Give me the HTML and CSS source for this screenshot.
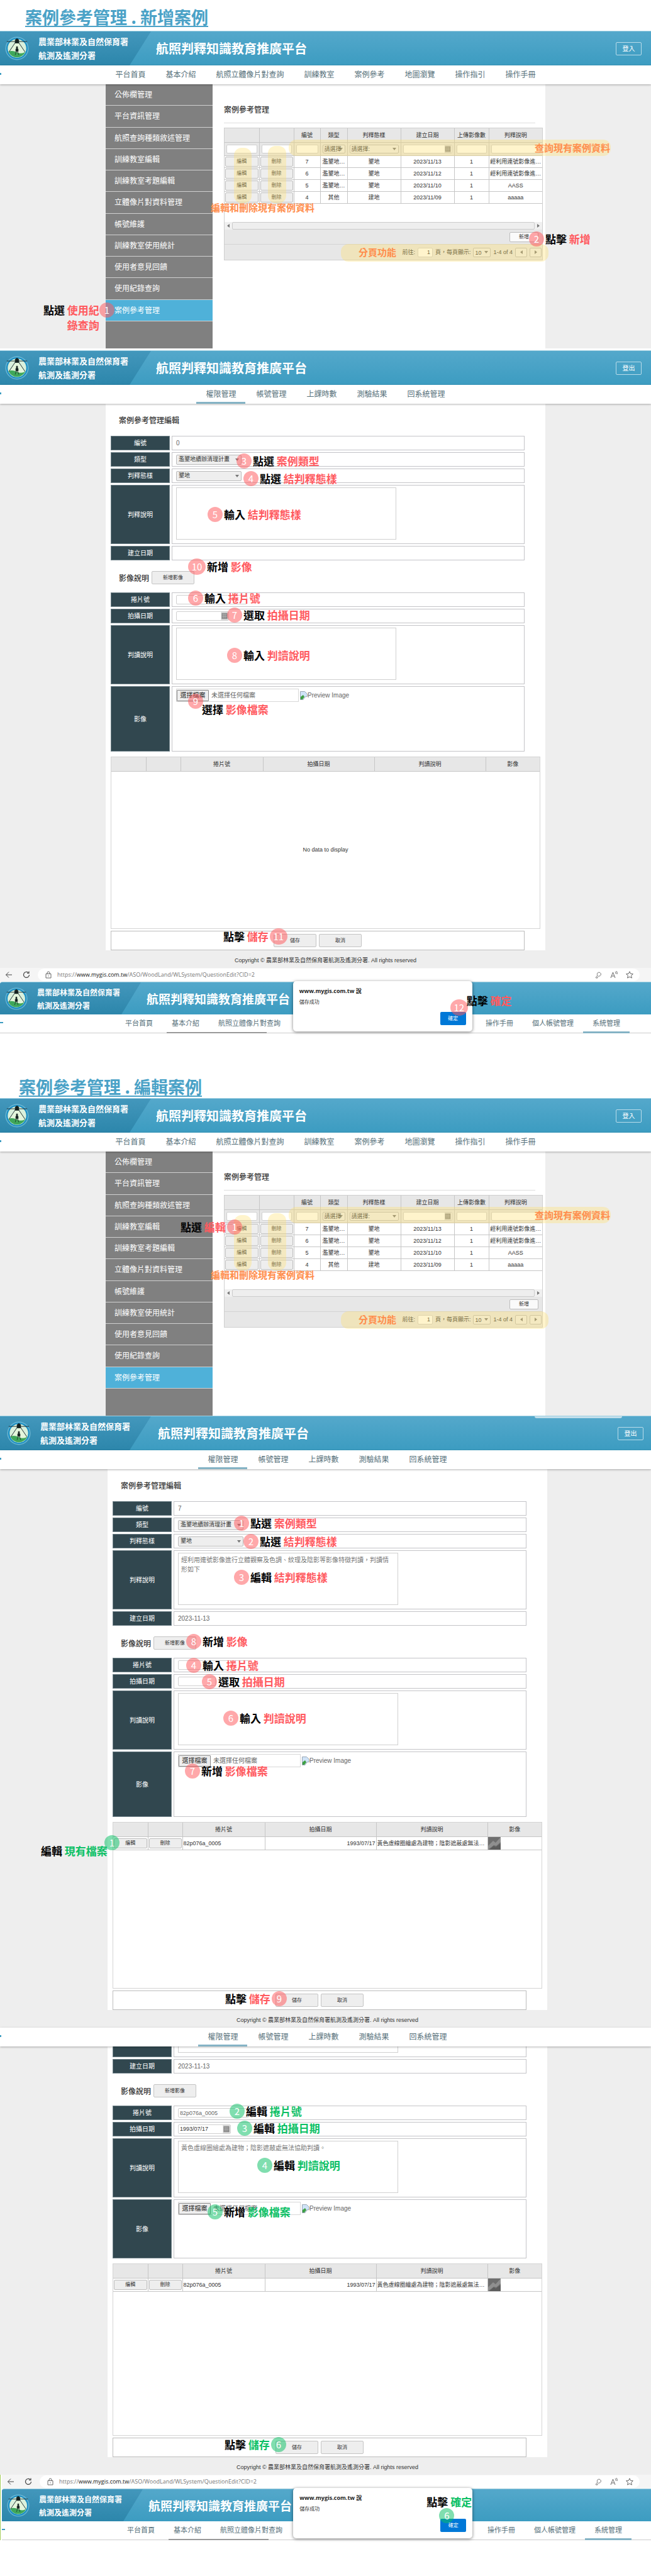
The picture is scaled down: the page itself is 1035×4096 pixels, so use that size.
FILE: index.html
```html
<!DOCTYPE html>
<html lang="zh-Hant">
<head>
<meta charset="utf-8">
<meta name="viewport" content="width=device-width, initial-scale=1">
<title>案例參考管理</title>
<link rel="stylesheet" href="styles.css">
</head>
<body>
<svg class="defs" aria-hidden="true">
  <symbol id="logo" viewBox="0 0 40 40">
    <circle cx="20" cy="20" r="19.5" fill="#8fd0e8" opacity=".6"/>
    <circle cx="20" cy="20" r="18" fill="#1c8fc4"/>
    <circle cx="20" cy="20" r="15.5" fill="#d9f0dc"/>
    <path d="M20 6 7 27a15 15 0 0 0 26 0z" fill="#e4f5dc"/>
    <path d="M6 25.500q6-3 14 1t14-1a15 15 0 0 1-28 0z" fill="#3fa75a"/>
    <path d="M20 6 6.500 26M20 6l13.500 20M3 8.500h34" fill="none" stroke="#1c2a2c" stroke-width="1"/>
    <path d="M17 5.500 20 3.500l3 2V11h-6zM19 17h2v4h1v4h-4v-4h1zM19 25l-2 6M21 25l2 6" fill="#14201f" stroke="#14201f" stroke-width=".8"/>
  </symbol>
  <symbol id="cal" viewBox="0 0 12 14">
    <rect width="12" height="14" fill="#d8d8d8"/>
    <rect x="1" y="2" width="10" height="10" fill="#8a8a8a"/>
    <path d="M2 5h8M2 8h8M4 3v8M7 3v8" stroke="#bdbdbd" stroke-width=".7"/>
  </symbol>
  <symbol id="broken" viewBox="0 0 12 14">
    <path d="M.5.500h7l4 4v4L8 9l-3 4.500H.500z" fill="#cfe3f7" stroke="#9aa7b5"/>
    <path d="M1 13V9l4-3 2 3-3 4z" fill="#3ea043"/>
  </symbol>
  <symbol id="photo" viewBox="0 0 20 20">
    <rect width="20" height="20" fill="#6e6e6e"/>
    <path d="M0 14 8 6l4 3 8-9v8l-7 6-4-1-9 7z" fill="#8f8f8f"/>
    <path d="m2 20 7-6 3 2 8-6v10z" fill="#5c5c5c"/>
  </symbol>
  <symbol id="back" viewBox="0 0 12 12"><path d="M11 6H1.500M6 1.500 1.500 6 6 10.500" fill="none" stroke="#444" stroke-width="1"/></symbol>
  <symbol id="reload" viewBox="0 0 12 12"><path d="M10.500 6A4.500 4.500 0 1 1 9 2.600M10 .5V3.500H7" fill="none" stroke="#444" stroke-width="1.200"/></symbol>
  <symbol id="lock" viewBox="0 0 12 12"><path d="M2 4.500h8v6.500H2zM4 4.500V3a2 2 0 0 1 4 0v1.500M6 7v1.500" fill="none" stroke="#666" stroke-width="1"/></symbol>
  <symbol id="key" viewBox="0 0 12 12"><path d="M5 7a3 3 0 1 1 1.500 1L5 9.500V11H2.500V9.500z" fill="none" stroke="#777" stroke-width="1"/></symbol>
  <symbol id="read" viewBox="0 0 12 12"><path d="m1 11 3.500-9L8 11M2.300 8h4.400M8 1q1.500 1.500 1 3.500M10 0q2 2.500 1 5" fill="none" stroke="#666" stroke-width="1"/></symbol>
  <symbol id="star" viewBox="0 0 12 12"><path d="m6 .8 1.600 3.500 3.800.4-2.800 2.600.8 3.800L6 9.200l-3.400 1.900.8-3.800L.6 4.700l3.800-.4z" fill="none" stroke="#666"/></symbol>
</svg>

<div class="caption"><h1><a href="#create">案例參考管理 . 新增案例</a></h1></div>

<section class="screen" id="create">
  <header class="bar">
    <svg class="logo"><use href="#logo"/></svg>
    <p class="org">農業部林業及自然保育署<br>航測及遙測分署</p>
    <p class="site">航照判釋知識教育推廣平台</p>
    <button class="login" type="button">登入</button>
  </header>
  <nav class="nav">
    <a href="#">平台首頁</a><a href="#">基本介紹</a><a href="#">航照立體像片對查詢</a><a href="#">訓練教室</a><a href="#">案例參考</a><a href="#">地圖瀏覽</a><a href="#">操作指引</a><a href="#">操作手冊</a>
  </nav>
  <div class="stage">
    <div class="sheet split">
      <aside class="side">
        <ul>
          <li><a href="#">公佈欄管理</a></li>
          <li><a href="#">平台資訊管理</a></li>
          <li><a href="#">航照查詢種類敘述管理</a></li>
          <li><a href="#">訓練教室編輯</a></li>
          <li><a href="#">訓練教室考題編輯</a></li>
          <li><a href="#">立體像片對資料管理</a></li>
          <li><a href="#">帳號維護</a></li>
          <li><a href="#">訓練教室使用統計</a></li>
          <li><a href="#">使用者意見回饋</a></li>
          <li><a href="#">使用紀錄查詢</a></li>
          <li class="on"><a href="#">案例參考管理</a></li>
        </ul>
      </aside>
      <main class="list">
        <h2>案例參考管理</h2>
        <div class="panel">
          <div class="rows">
            <table class="grid cases">
              <colgroup><col class="w-btn"><col class="w-btn"><col class="w-no"><col class="w-type"><col class="w-form"><col class="w-date"><col class="w-count"><col></colgroup>
              <thead>
                <tr><th></th><th></th><th>編號</th><th>類型</th><th>判釋態樣</th><th>建立日期</th><th>上傳影像數</th><th>判釋說明</th></tr>
                <tr class="filter">
                  <td><input type="text" aria-label="編輯"></td><td><input type="text" aria-label="刪除"></td><td><input type="text" aria-label="編號"></td>
                  <td><select aria-label="類型"><option>請選擇</option></select></td>
                  <td><select aria-label="判釋態樣"><option>請選擇:</option></select></td>
                  <td><span class="date"><input type="text" aria-label="建立日期"><svg><use href="#cal"/></svg></span></td>
                  <td><input type="text" aria-label="上傳影像數"></td><td><input type="text" aria-label="判釋說明"></td>
                </tr>
              </thead>
              <tbody>
                <tr><td><button type="button">編輯</button></td><td><button type="button">刪除</button></td><td>7</td><td>濫墾地…</td><td>墾地</td><td>2023/11/13</td><td>1</td><td>經利用連號影像進…</td></tr>
                <tr><td><button type="button">編輯</button></td><td><button type="button">刪除</button></td><td>6</td><td>濫墾地…</td><td>墾地</td><td>2023/11/12</td><td>1</td><td>經利用連號影像進…</td></tr>
                <tr><td><button type="button">編輯</button></td><td><button type="button">刪除</button></td><td>5</td><td>濫墾地…</td><td>墾地</td><td>2023/11/10</td><td>1</td><td>AASS</td></tr>
                <tr><td><button type="button">編輯</button></td><td><button type="button">刪除</button></td><td>4</td><td>其他</td><td>建地</td><td>2023/11/09</td><td>1</td><td>aaaaa</td></tr>
              </tbody>
            </table>
          </div>
          <div class="scroll"><i class="tri left"></i><span></span><i class="tri right"></i></div>
          <div class="tools"><button type="button">新增</button></div>
          <div class="pager">
            <label for="page1">前往:</label><input id="page1" type="text" value="1"><label for="size1">頁，每頁顯示:</label>
            <select id="size1"><option>10</option></select><span>1-4 of 4</span>
            <button type="button" aria-label="上一頁"><i class="tri left"></i></button><button type="button" aria-label="下一頁"><i class="tri right"></i></button>
          </div>
        </div>
      </main>
      <div class="mark mark-filter">查詢現有案例資料</div>
      <div class="mark mark-edit"></div>
      <div class="mark mark-delete"></div>
      <div class="mark mark-pager">分頁功能</div>
      <p class="hint">編輯和刪除現有案例資料</p>
      <div class="note s1-n1"><b>1</b></div>
      <p class="note s1-t1"><span>點選 <em>使用紀</em><br><em>錄查詢</em></span></p>
      <p class="note s1-n2"><b>2</b><span>點擊 <em>新增</em></span></p>
    </div>
  </div>
</section>

<section class="screen follow">
  <header class="bar">
    <svg class="logo"><use href="#logo"/></svg>
    <p class="org">農業部林業及自然保育署<br>航測及遙測分署</p>
    <p class="site">航照判釋知識教育推廣平台</p>
    <button class="login" type="button">登出</button>
  </header>
  <nav class="nav">
    <a class="on" href="#">權限管理</a><a href="#">帳號管理</a><a href="#">上課時數</a><a href="#">測驗結果</a><a href="#">回系統管理</a>
  </nav>
  <div class="stage">
    <div class="sheet">
      <h2 class="form-title">案例參考管理編輯</h2>
      <table class="form">
        <tr><th>編號</th><td>0</td></tr>
        <tr><th><label for="type2">類型</label></th><td><select id="type2"><option>濫墾地續辦清理計畫</option></select></td></tr>
        <tr><th><label for="kind2">判釋態樣</label></th><td><select id="kind2"><option>墾地</option></select></td></tr>
        <tr class="tall"><th><label for="desc2">判釋說明</label></th><td><textarea id="desc2"></textarea></td></tr>
        <tr><th>建立日期</th><td></td></tr>
      </table>
      <div class="sub"><h3>影像說明</h3><button class="push" type="button">新增影像</button></div>
      <table class="form">
        <tr><th><label for="roll2">捲片號</label></th><td><input id="roll2" class="roll" type="text"></td></tr>
        <tr><th><label for="shot2">拍攝日期</label></th><td><span class="date"><input id="shot2" type="text"><svg><use href="#cal"/></svg></span></td></tr>
        <tr class="tall"><th><label for="read2">判讀說明</label></th><td><textarea id="read2"></textarea></td></tr>
        <tr class="taller"><th>影像</th><td><div class="files"><label class="file"><input type="file"><span>選擇檔案</span>未選擇任何檔案</label><span class="alt"><svg><use href="#broken"/></svg>Preview Image</span></div></td></tr>
      </table>
      <div class="images">
        <table class="grid">
          <colgroup><col class="w-btn"><col class="w-btn"><col class="w-roll"><col class="w-shot"><col class="w-shot"><col></colgroup>
          <thead><tr><th></th><th></th><th>捲片號</th><th>拍攝日期</th><th>判讀說明</th><th>影像</th></tr></thead>
        </table>
        <p class="empty">No data to display</p>
      </div>
      <div class="actions"><button class="push" type="button">儲存</button><button class="push" type="button">取消</button></div>
      <p class="note s2-n3"><b>3</b><span>點選 <em>案例類型</em></span></p>
      <p class="note s2-n4"><b>4</b><span>點選 <em>結判釋態樣</em></span></p>
      <p class="note s2-n5"><b>5</b><span>輸入 <em>結判釋態樣</em></span></p>
      <p class="note s2-n10"><b class="wide">10</b><span>新增 <em>影像</em></span></p>
      <p class="note s2-n6"><b>6</b><span>輸入 <em>捲片號</em></span></p>
      <p class="note s2-n7"><b>7</b><span>選取 <em>拍攝日期</em></span></p>
      <p class="note s2-n8"><b>8</b><span>輸入 <em>判讀說明</em></span></p>
      <div class="note s2-n9"><b>9</b></div>
      <p class="note s2-t9"><span>選擇 <em>影像檔案</em></span></p>
      <p class="note s2-n11"><span>點擊 <em>儲存</em></span><b class="wide">11</b></p>
    </div>
  </div>
  <footer class="foot">Copyright © 農業部林業及自然保育署航測及遙測分署. All rights reserved</footer>
</section>

<section class="screen browser">
  <div class="address">
    <svg><use href="#back"/></svg><svg><use href="#reload"/></svg>
    <div class="url"><svg><use href="#lock"/></svg><span>https://<strong>www.mygis.com.tw</strong>/ASO/WoodLand/WLSystem/QuestionEdit?CID=2</span><svg><use href="#key"/></svg><svg><use href="#read"/></svg><svg><use href="#star"/></svg></div>
  </div>
  <header class="bar">
    <svg class="logo"><use href="#logo"/></svg>
    <p class="org">農業部林業及自然保育署<br>航測及遙測分署</p>
    <p class="site">航照判釋知識教育推廣平台</p>
  </header>
  <nav class="nav">
    <a href="#">平台首頁</a><a href="#">基本介紹</a><a href="#">航照立體像片對查詢</a><a href="#">訓練教室</a><a href="#">案例參考</a><a href="#">地圖瀏覽</a><a href="#">操作指引</a><a href="#">操作手冊</a><a href="#">個人帳號管理</a><a class="on" href="#">系統管理</a>
  </nav>
  <div class="dialog" role="dialog" aria-label="www.mygis.com.tw 說">
    <h4>www.mygis.com.tw 說</h4>
    <p>儲存成功</p>
    <button type="button">確定</button>
    <div class="note s3-n12"><b class="wide">12</b></div>
    <div class="note s3-t12"><span>點擊 <em>確定</em></span></div>
  </div>
</section>

<div class="caption second"><h1><a href="#edit">案例參考管理 . 編輯案例</a></h1></div>

<section class="screen" id="edit">
  <header class="bar">
    <svg class="logo"><use href="#logo"/></svg>
    <p class="org">農業部林業及自然保育署<br>航測及遙測分署</p>
    <p class="site">航照判釋知識教育推廣平台</p>
    <button class="login" type="button">登入</button>
  </header>
  <nav class="nav">
    <a href="#">平台首頁</a><a href="#">基本介紹</a><a href="#">航照立體像片對查詢</a><a href="#">訓練教室</a><a href="#">案例參考</a><a href="#">地圖瀏覽</a><a href="#">操作指引</a><a href="#">操作手冊</a>
  </nav>
  <div class="stage">
    <div class="sheet split">
      <aside class="side">
        <ul>
          <li><a href="#">公佈欄管理</a></li>
          <li><a href="#">平台資訊管理</a></li>
          <li><a href="#">航照查詢種類敘述管理</a></li>
          <li><a href="#">訓練教室編輯</a></li>
          <li><a href="#">訓練教室考題編輯</a></li>
          <li><a href="#">立體像片對資料管理</a></li>
          <li><a href="#">帳號維護</a></li>
          <li><a href="#">訓練教室使用統計</a></li>
          <li><a href="#">使用者意見回饋</a></li>
          <li><a href="#">使用紀錄查詢</a></li>
          <li class="on"><a href="#">案例參考管理</a></li>
        </ul>
      </aside>
      <main class="list">
        <h2>案例參考管理</h2>
        <div class="panel">
          <div class="rows">
            <table class="grid cases">
              <colgroup><col class="w-btn"><col class="w-btn"><col class="w-no"><col class="w-type"><col class="w-form"><col class="w-date"><col class="w-count"><col></colgroup>
              <thead>
                <tr><th></th><th></th><th>編號</th><th>類型</th><th>判釋態樣</th><th>建立日期</th><th>上傳影像數</th><th>判釋說明</th></tr>
                <tr class="filter">
                  <td><input type="text" aria-label="編輯"></td><td><input type="text" aria-label="刪除"></td><td><input type="text" aria-label="編號"></td>
                  <td><select aria-label="類型"><option>請選擇</option></select></td>
                  <td><select aria-label="判釋態樣"><option>請選擇:</option></select></td>
                  <td><span class="date"><input type="text" aria-label="建立日期"><svg><use href="#cal"/></svg></span></td>
                  <td><input type="text" aria-label="上傳影像數"></td><td><input type="text" aria-label="判釋說明"></td>
                </tr>
              </thead>
              <tbody>
                <tr><td><button type="button">編輯</button></td><td><button type="button">刪除</button></td><td>7</td><td>濫墾地…</td><td>墾地</td><td>2023/11/13</td><td>1</td><td>經利用連號影像進…</td></tr>
                <tr><td><button type="button">編輯</button></td><td><button type="button">刪除</button></td><td>6</td><td>濫墾地…</td><td>墾地</td><td>2023/11/12</td><td>1</td><td>經利用連號影像進…</td></tr>
                <tr><td><button type="button">編輯</button></td><td><button type="button">刪除</button></td><td>5</td><td>濫墾地…</td><td>墾地</td><td>2023/11/10</td><td>1</td><td>AASS</td></tr>
                <tr><td><button type="button">編輯</button></td><td><button type="button">刪除</button></td><td>4</td><td>其他</td><td>建地</td><td>2023/11/09</td><td>1</td><td>aaaaa</td></tr>
              </tbody>
            </table>
          </div>
          <div class="scroll"><i class="tri left"></i><span></span><i class="tri right"></i></div>
          <div class="tools"><button type="button">新增</button></div>
          <div class="pager">
            <label for="page2">前往:</label><input id="page2" type="text" value="1"><label for="size2">頁，每頁顯示:</label>
            <select id="size2"><option>10</option></select><span>1-4 of 4</span>
            <button type="button" aria-label="上一頁"><i class="tri left"></i></button><button type="button" aria-label="下一頁"><i class="tri right"></i></button>
          </div>
        </div>
      </main>
      <div class="mark mark-filter">查詢現有案例資料</div>
      <div class="mark mark-edit"></div>
      <div class="mark mark-delete"></div>
      <div class="mark mark-pager">分頁功能</div>
      <p class="hint">編輯和刪除現有案例資料</p>
      <p class="note s4-n1"><span>點選 <em>編輯</em></span><b>1</b></p>
    </div>
  </div>
</section>

<section class="screen shift">
  <header class="bar tabbed">
    <svg class="logo"><use href="#logo"/></svg>
    <p class="org">農業部林業及自然保育署<br>航測及遙測分署</p>
    <p class="site">航照判釋知識教育推廣平台</p>
    <button class="login" type="button">登出</button>
  </header>
  <nav class="nav">
    <a class="on" href="#">權限管理</a><a href="#">帳號管理</a><a href="#">上課時數</a><a href="#">測驗結果</a><a href="#">回系統管理</a>
  </nav>
  <div class="stage">
    <div class="sheet">
      <h2 class="form-title">案例參考管理編輯</h2>
      <table class="form">
        <tr><th>編號</th><td>7</td></tr>
        <tr><th><label for="type5">類型</label></th><td><select id="type5"><option>濫墾地續辦清理計畫</option></select></td></tr>
        <tr><th><label for="kind5">判釋態樣</label></th><td><select id="kind5"><option>墾地</option></select></td></tr>
        <tr class="tall"><th><label for="desc5">判釋說明</label></th><td><textarea id="desc5">經利用連號影像進行立體觀察及色調、紋理及陰影等影像特徵判讀，判讀情形如下</textarea></td></tr>
        <tr><th>建立日期</th><td>2023-11-13</td></tr>
      </table>
      <div class="sub"><h3>影像說明</h3><button class="push" type="button">新增影像</button></div>
      <table class="form">
        <tr><th><label for="roll5">捲片號</label></th><td><input id="roll5" class="roll" type="text"></td></tr>
        <tr><th><label for="shot5">拍攝日期</label></th><td><input id="shot5" class="short" type="text"></td></tr>
        <tr class="tall"><th><label for="read5">判讀說明</label></th><td><textarea id="read5"></textarea></td></tr>
        <tr class="taller"><th>影像</th><td><div class="files"><label class="file"><input type="file"><span>選擇檔案</span>未選擇任何檔案</label><span class="alt"><svg><use href="#broken"/></svg>Preview Image</span></div></td></tr>
      </table>
      <div class="images short">
        <table class="grid shots">
          <colgroup><col class="w-btn"><col class="w-btn"><col class="w-roll"><col class="w-shot"><col class="w-shot"><col></colgroup>
          <thead><tr><th></th><th></th><th>捲片號</th><th>拍攝日期</th><th>判讀說明</th><th>影像</th></tr></thead>
          <tbody><tr><td><button type="button">編輯</button></td><td><button type="button">刪除</button></td><td>82p076a_0005</td><td class="end">1993/07/17</td><td>黃色虛線圈繪處為建物；陰影遮蔽處無法…</td><td class="pic"><svg><use href="#photo"/></svg></td></tr></tbody>
        </table>
      </div>
      <div class="actions"><button class="push" type="button">儲存</button><button class="push" type="button">取消</button></div>
      <p class="note s5-n1"><b>1</b><span>點選 <em>案例類型</em></span></p>
      <p class="note s5-n2"><b>2</b><span>點選 <em>結判釋態樣</em></span></p>
      <p class="note s5-n3"><b>3</b><span>編輯 <em>結判釋態樣</em></span></p>
      <p class="note s5-n8"><b>8</b><span>新增 <em>影像</em></span></p>
      <p class="note s5-n4"><b>4</b><span>輸入 <em>捲片號</em></span></p>
      <p class="note s5-n5"><b>5</b><span>選取 <em>拍攝日期</em></span></p>
      <p class="note s5-n6"><b>6</b><span>輸入 <em>判讀說明</em></span></p>
      <p class="note s5-n7"><b>7</b><span>新增 <em>影像檔案</em></span></p>
      <div class="note green s5-g1"><b>1</b></div>
      <p class="note green s5-t1"><span>編輯 <em>現有檔案</em></span></p>
      <p class="note s5-n9"><span>點擊 <em>儲存</em></span><b>9</b></p>
    </div>
  </div>
  <footer class="foot">Copyright © 農業部林業及自然保育署航測及遙測分署. All rights reserved</footer>
</section>

<section class="screen shift">
  <nav class="nav">
    <a class="on" href="#">權限管理</a><a href="#">帳號管理</a><a href="#">上課時數</a><a href="#">測驗結果</a><a href="#">回系統管理</a>
  </nav>
  <div class="stage">
    <div class="sheet">
      <table class="form">
        <tr class="cut"><th></th><td><div class="cut-box"></div></td></tr>
        <tr><th>建立日期</th><td>2023-11-13</td></tr>
      </table>
      <div class="sub"><h3>影像說明</h3><button class="push" type="button">新增影像</button></div>
      <table class="form">
        <tr><th><label for="roll6">捲片號</label></th><td><input id="roll6" class="roll" type="text" value="82p076a_0005"></td></tr>
        <tr><th><label for="shot6">拍攝日期</label></th><td><span class="date"><input id="shot6" type="text" value="1993/07/17"><svg><use href="#cal"/></svg></span></td></tr>
        <tr class="tall"><th><label for="read6">判讀說明</label></th><td><textarea id="read6">黃色虛線圈繪處為建物；陰影遮蔽處無法協助判讀。</textarea></td></tr>
        <tr class="tall"><th>影像</th><td><div class="files"><label class="file"><input type="file"><span>選擇檔案</span>未選擇任何檔案</label><span class="alt"><svg><use href="#broken"/></svg>Preview Image</span></div></td></tr>
      </table>
      <div class="images">
        <table class="grid shots">
          <colgroup><col class="w-btn"><col class="w-btn"><col class="w-roll"><col class="w-shot"><col class="w-shot"><col></colgroup>
          <thead><tr><th></th><th></th><th>捲片號</th><th>拍攝日期</th><th>判讀說明</th><th>影像</th></tr></thead>
          <tbody><tr><td><button type="button">編輯</button></td><td><button type="button">刪除</button></td><td>82p076a_0005</td><td class="end">1993/07/17</td><td>黃色虛線圈繪處為建物；陰影遮蔽處無法…</td><td class="pic"><svg><use href="#photo"/></svg></td></tr></tbody>
        </table>
      </div>
      <div class="actions"><button class="push" type="button">儲存</button><button class="push" type="button">取消</button></div>
      <p class="note green s6-n2"><b>2</b><span>編輯 <em>捲片號</em></span></p>
      <p class="note green s6-n3"><b>3</b><span>編輯 <em>拍攝日期</em></span></p>
      <p class="note green s6-n4"><b>4</b><span>編輯 <em>判讀說明</em></span></p>
      <p class="note green s6-n5"><b>5</b><span>新增 <em>影像檔案</em></span></p>
      <p class="note green s6-n6"><span>點擊 <em>儲存</em></span><b>6</b></p>
    </div>
  </div>
  <footer class="foot">Copyright © 農業部林業及自然保育署航測及遙測分署. All rights reserved</footer>
</section>

<section class="screen browser last">
  <div class="address">
    <svg><use href="#back"/></svg><svg><use href="#reload"/></svg>
    <div class="url"><svg><use href="#lock"/></svg><span>https://<strong>www.mygis.com.tw</strong>/ASO/WoodLand/WLSystem/QuestionEdit?CID=2</span><svg><use href="#key"/></svg><svg><use href="#read"/></svg><svg><use href="#star"/></svg></div>
  </div>
  <header class="bar">
    <svg class="logo"><use href="#logo"/></svg>
    <p class="org">農業部林業及自然保育署<br>航測及遙測分署</p>
    <p class="site">航照判釋知識教育推廣平台</p>
  </header>
  <nav class="nav">
    <a href="#">平台首頁</a><a href="#">基本介紹</a><a href="#">航照立體像片對查詢</a><a href="#">訓練教室</a><a href="#">案例參考</a><a href="#">地圖瀏覽</a><a href="#">操作指引</a><a href="#">操作手冊</a><a href="#">個人帳號管理</a><a class="on" href="#">系統管理</a>
  </nav>
  <div class="dialog" role="dialog" aria-label="www.mygis.com.tw 說">
    <h4>www.mygis.com.tw 說</h4>
    <p>儲存成功</p>
    <button type="button">確定</button>
    <div class="note green s7-n6"><b>6</b></div>
    <div class="note green s7-t6"><span>點擊 <em>確定</em></span></div>
  </div>
</section>
</body>
</html>
```
FILE: styles.css
```css
* { box-sizing: border-box; }
body, h1, h2, h3, h4, p, ul { margin: 0; padding: 0; }
body {
  background: #fff;
  color: #333;
  font: 10px/14px "Liberation Sans", "Noto Sans CJK TC", sans-serif;
  overflow-x: hidden;
}
a { color: inherit; text-decoration: none; }
button, input, select, textarea { font: inherit; color: inherit; margin: 0; }
.defs { position: absolute; width: 0; height: 0; }

/* captions */
.caption { height: 49px; padding: 9px 0 0 40px; }
.caption.second { height: 103px; padding: 67px 0 0 30px; }
.caption h1 { font: bold 27px/36px "Noto Sans CJK TC", sans-serif; color: #4aa2c7; }
.caption a { text-decoration: underline; text-decoration-thickness: 2px; text-underline-offset: 3px; }

/* header band */
.screen { position: relative; }
.follow { margin-top: 3px; }
.bar {
  position: relative;
  display: flex;
  align-items: center;
  height: 55px;
  padding: 0 15px 0 8px;
  background: linear-gradient(#54a8cb, #3c9cc1);
  border-top: 1px solid #9fd0e2;
  color: #fff;
  font-family: "Noto Sans CJK TC", sans-serif;
  font-weight: bold;
}
.bar::before {
  content: "";
  position: absolute;
  inset: 0 auto 0 0;
  width: 240px;
  background: linear-gradient(#4397bc, #2c86ab);
  clip-path: polygon(0 0, 100% 0, 206px 100%, 0 100%);
}
.bar > * { position: relative; }
.logo { width: 38px; height: 40px; flex: none; }
.org { width: 187px; margin-left: 15px; font-size: 13px; line-height: 22px; white-space: nowrap; flex: none; }
.site { font-size: 20px; line-height: 28px; white-space: nowrap; }
.login {
  margin-left: auto;
  width: 41px;
  height: 21px;
  padding: 0;
  border: 1px solid #b9dcea;
  border-radius: 2px;
  background: none;
  font-size: 10px;
  font-weight: normal;
  line-height: 18px;
}
.tabbed::after {
  content: "";
  position: absolute;
  top: 0;
  right: 46px;
  width: 139px;
  height: 3px;
  border-radius: 0 0 4px 4px;
  background: #c3dfeb;
}

/* navigation */
.nav {
  position: relative;
  z-index: 1;
  display: flex;
  justify-content: center;
  gap: 2px;
  height: 30px;
  background: #fff;
  box-shadow: 0 1px 3px rgba(0, 0, 0, .3);
  font: 12px/27px "Noto Sans CJK TC", sans-serif;
  color: #56707a;
}
.nav::before {
  content: "";
  position: absolute;
  left: 0;
  top: 12px;
  width: 2px;
  height: 3px;
  background: #3c9cc1;
}
.nav a { padding: 0 15px; white-space: nowrap; }
.nav .on { border-bottom: 3px solid #84b3c5; }

/* page body */
.stage { background: #eee; }
.sheet { position: relative; max-width: 699px; margin: 0 auto; background: #fff; }
.shift .stage, .shift .nav { padding-left: 6px; }
.shift .bar { padding-left: 11px; padding-right: 12px; }
.split { display: flex; min-height: 420px; }
.side { width: 170px; flex: none; background: #808080; color: #fff; }
.side ul { display: grid; grid-auto-rows: 1fr; min-height: 377px; list-style: none; }
.side li { border-bottom: 1px solid #d0d0d0; font: 12px/32px "Noto Sans CJK TC", sans-serif; padding-left: 14px; }
.side .on { background: #4fb1d9; }
.list { flex: 1; min-width: 0; padding: 30px 4px 0 18px; }
h2, h3 { font: 500 12px/20px "Noto Sans CJK TC", sans-serif; color: #333; }
.list h2 { margin: 0 12px 7px 0; padding-bottom: 11px; border-bottom: 1px solid #ddd; }

/* data grids */
.panel { border: 1px solid #cfcfcf; background: #e7e7e7; font-size: 9px; }
.rows { min-height: 149px; background: #fff; }
.grid { width: 100%; table-layout: fixed; border-collapse: collapse; font-size: 9px; line-height: 12px; }
.grid th, .grid td { padding: 0 1px; border: 1px solid #c6c6c6; white-space: nowrap; text-align: center; }
.grid th { height: 22px; background: #e7e7e7; font-weight: normal; border-top: 0; }
.grid tr > :first-child { border-left: 0; }
.grid tr > :last-child { border-right: 0; }
.grid td { height: 19px; }
.grid .filter td { height: 21px; padding: 0 3px; background: #e7e7e7; }
.w-btn { width: 55px; }
.w-no { width: 42px; }
.w-type { width: 43px; }
.w-form, .w-date { width: 85px; }
.w-count { width: 55px; }
.w-roll { width: 131px; }
.w-shot { width: 177px; }
.grid button, .tools button {
  display: block;
  width: 100%;
  height: 16px;
  padding: 0;
  border: 1px solid #bdbdbd;
  border-radius: 2px;
  background: #eee;
  font-size: 8px;
  line-height: 12px;
}
input, select, textarea { border: 1px solid #d0d0d0; border-radius: 2px; background: #fff; outline: 0; }
.filter input, .filter select { display: block; width: 100%; height: 14px; padding: 0 2px; line-height: 12px; }
select {
  appearance: none;
  background: #eee url("data:image/svg+xml,%3Csvg xmlns='http://www.w3.org/2000/svg' viewBox='0 0 6 4'%3E%3Cpath d='M0 0h6L3 4z' fill='%23777'/%3E%3C/svg%3E") no-repeat right 3px center / 6px 4px;
  border-color: #bbb;
}
.date { display: flex; width: 84px; height: 15px; border: 1px solid #d0d0d0; border-radius: 2px; background: #fff; }
.date input { flex: 1; min-width: 0; height: 13px; padding: 0 2px; border: 0; background: none; color: #333; }
.date svg { width: 12px; height: 13px; flex: none; }
.filter .date { width: 100%; height: 14px; }
.filter .date input { height: 12px; }
.filter .date svg { height: 12px; }
.scroll { display: flex; align-items: center; gap: 4px; height: 12px; padding: 0 4px; background: #f0f0f0; }
.scroll span { flex: 1; height: 12px; border: 1px solid #ccc; border-radius: 2px; background: #eee; }
.tri { display: block; width: 0; height: 0; border: 3px solid transparent; }
.tri.left { border-right: 4px solid #777; border-left: 0; }
.tri.right { border-left: 4px solid #777; border-right: 0; }
.tools { display: flex; justify-content: flex-end; align-items: center; height: 24px; padding-right: 6px; border-bottom: 1px solid #d4d4d4; }
.tools button { width: 46px; background: #fafafa; }
.pager { display: flex; align-items: center; justify-content: flex-end; gap: 4px; height: 24px; padding-right: 1px; }
.pager input { width: 24px; height: 15px; padding: 0 3px; text-align: right; }
.pager select { width: 28px; height: 15px; padding: 0 2px; }
.pager button { display: grid; place-items: center; width: 19px; height: 15px; padding: 0; border: 1px solid #bbb; border-radius: 2px; background: #eee; }

/* edit form */
.form-title { padding: 16px 0 15px 21px; box-sizing: content-box; }
.form { width: calc(100% - 35px); margin: -3px 0 0 5px; border-spacing: 3px; color: #666; line-height: 13px; }
.form th { width: 94px; height: 23px; padding: 0; background: #31474f; border: 1px solid #6f8188; color: #fff; font-weight: normal; }
.form td { padding: 0 7px 0 6px; border: 1px solid #c4c4c8; }
.form select { display: block; width: 104px; height: 16px; padding: 0 3px; font-size: 9px; line-height: 13px; color: #333; }
.form input { font-size: 9px; }
.form .roll { display: block; width: 113px; height: 15px; padding: 0 2px; }
.form .short { display: block; width: 60px; height: 15px; }
.form .tall th { height: 94px; }
.form .taller th { height: 104px; }
.form .tall td, .form .taller td { padding-top: 3px; vertical-align: top; }
textarea { display: block; width: 350px; height: 83px; padding: 3px 6px 0 4px; line-height: 15px; font-size: 10px; resize: none; overflow: hidden; color: #777; border-radius: 0; }
.form .cut th { height: 17px; border-top: 0; }
.form .cut td { border-top: 0; vertical-align: top; }
.cut-box { width: 350px; height: 10px; border: 1px solid #d0d0d0; border-top: 0; }
.files { display: flex; align-items: center; gap: 2px; }
.file { position: relative; display: flex; align-items: center; gap: 4px; width: 195px; height: 21px; border: 1px solid #d8d8d8; }
.file input { position: absolute; inset: 0; opacity: 0; width: 100%; }
.file span { width: 51px; height: 18px; border: 1px solid #888; border-radius: 1px; background: #eee; color: #222; text-align: center; line-height: 15px; }
.alt { display: flex; align-items: center; }
.alt svg { width: 12px; height: 14px; }
.sub { display: flex; align-items: center; gap: 4px; padding: 14px 0 13px 21px; }
.sub h3 { white-space: nowrap; }
.push { width: 68px; height: 21px; padding: 0; border: 1px solid #c4c4c4; border-radius: 2px; background: #eee; font-size: 8px; line-height: 16px; color: #333; }
.images { margin: 5px 8px 3px; min-height: 274px; border: 1px solid #d4d4d4; display: flex; flex-direction: column; }
.images.short { min-height: 265px; }
.images .empty { flex: 1; display: grid; place-items: center; font-size: 9px; }
.grid.shots td { text-align: left; height: 20px; }
.grid.shots .end { text-align: right; }
.grid.shots .pic { padding: 0; }
.pic svg { display: block; width: 20px; height: 20px; }
.actions { display: flex; justify-content: center; gap: 4px; margin: 0 33px 0 8px; padding: 4px; border: 1px solid #bdbdbd; }
.foot { height: 28px; background: #eee; text-align: center; font-size: 9px; line-height: 32px; }
.shift .foot { padding-left: 6px; }

/* browser strip */
.address { display: flex; align-items: center; gap: 16px; height: 22px; padding: 0 0 0 8px; background: #f5f5f5; }
.address svg { width: 12px; height: 12px; flex: none; }
.url { flex: 1; display: flex; align-items: center; gap: 13px; height: 20px; margin: 0 18px 0 -4px; padding: 0 10px 0 11px; border-radius: 10px; background: #fff; font: 9px/14px "Open Sans", "Noto Sans", sans-serif; color: #777; }
.url span { flex: 1; }
.url svg + span { margin-left: -5px; }
.url strong { font-weight: normal; color: #111; }
.browser .bar { height: 52px; border-radius: 4px 0 0 0; overflow: hidden; }
.browser .bar::before { width: 224px; clip-path: polygon(0 0, 100% 0, 193px 100%, 0 100%); }
.browser .logo { width: 36px; height: 38px; }
.browser .org { width: 174px; font-size: 12px; line-height: 21px; }
.browser .site { font-size: 19px; }
.browser .nav { justify-content: flex-start; gap: 0; padding-left: 184px; font-size: 11px; box-shadow: none; border-bottom: 1px solid #ccc; }
.browser .nav::before { width: 5px; height: 2px; }
.browser .nav::after { content: ""; position: absolute; left: 265px; bottom: -1px; width: 159px; height: 2px; background: #999; }
.browser .nav a { height: 30px; }
.last { border-left: 1px solid #a5cf5c; margin-bottom: 57px; }
.last .bar, .last .address, .last .nav { margin-left: 2px; }
.dialog {
  position: absolute;
  z-index: 2;
  left: 45%;
  top: 21px;
  width: 285px;
  height: 80px;
  padding: 9px 10px;
  border-radius: 5px;
  background: #fff;
  box-shadow: 0 1px 5px rgba(0, 0, 0, .5);
}
.dialog h4 { font: bold 9px/14px "Open Sans", "Noto Sans CJK TC", sans-serif; color: #222; }
.dialog p { margin-top: 4px; font-size: 8px; }
.dialog button { display: block; width: 41px; height: 21px; margin-left: auto; margin-top: 8px; padding: 0; border: 0; border-radius: 2px; background: #0078d7; color: #fff; font-size: 8px; }

/* walkthrough notes laid over the screens */
.mark, .hint, .note { position: absolute; z-index: 2; white-space: nowrap; }
.mark, .hint { font: bold 15px/26px "Noto Sans CJK TC", sans-serif; color: #ff8e4d; }
.mark { border-radius: 12px; background: rgba(255, 222, 105, .34); }
.mark-filter { left: 291px; top: 88px; width: 512px; text-align: right; padding-right: 1px; }
.mark-edit { left: 204px; top: 101px; width: 28px; height: 88px; }
.mark-delete { left: 258px; top: 98px; width: 29px; height: 91px; }
.mark-pager { left: 374px; top: 254px; width: 330px; height: 28px; padding-left: 28px; }
.hint { left: 167px; top: 183px; }
.note { display: flex; align-items: center; gap: 2px; font: bold 17px/24px "Noto Sans CJK TC", sans-serif; color: #000; }
.note em { font-style: normal; color: #ff5a5f; }
.note b { display: grid; place-items: center; width: 24px; height: 24px; border-radius: 50%; background: rgba(255, 88, 92, .52); color: #fff; font: 15px/24px "Noto Sans CJK TC", sans-serif; }
.note .wide { width: 28px; height: 26px; }
.note.green em { color: #0cc065; }
.note.green b { background: rgba(12, 192, 101, .52); }
.s1-n1 { left: -10px; top: 347px; }
.s1-t1 { left: -99px; top: 347px; text-align: right; }
.s1-n2 { left: 673px; top: 234px; }
.s2-n3 { left: 208px; top: 79px; }
.s2-n4 { left: 219px; top: 107px; }
.s2-n5 { left: 162px; top: 164px; }
.s2-n10 { left: 131px; top: 246px; }
.s2-n6 { left: 131px; top: 297px; }
.s2-n7 { left: 193px; top: 324px; }
.s2-n8 { left: 193px; top: 388px; }
.s2-n9 { left: 131px; top: 461px; }
.s2-t9 { left: 153px; top: 474px; }
.s2-n11 { left: 187px; top: 834px; }
.dialog .s3-n12 { left: 250px; top: 29px; }
.dialog .s3-t12 { left: 276px; top: 19px; }
.s4-n1 { left: 119px; top: 108px; }
.s5-n1 { left: 201px; top: 74px; }
.s5-n2 { left: 216px; top: 103px; }
.s5-n3 { left: 201px; top: 160px; }
.s5-n8 { left: 125px; top: 262px; }
.s5-n4 { left: 125px; top: 300px; }
.s5-n5 { left: 150px; top: 326px; }
.s5-n6 { left: 184px; top: 384px; }
.s5-n7 { left: 123px; top: 468px; }
.s5-g1 { left: -5px; top: 582px; }
.s5-t1 { left: -106px; top: 595px; }
.s5-n9 { left: 187px; top: 830px; }
.s6-n2 { left: 194px; top: 94px; }
.s6-n3 { left: 206px; top: 121px; }
.s6-n4 { left: 238px; top: 180px; }
.s6-n5 { left: 159px; top: 254px; }
.s6-n6 { left: 186px; top: 624px; }
.dialog .s7-n6 { left: 232px; top: 32px; }
.dialog .s7-t6 { left: 212px; top: 10px; }
```
